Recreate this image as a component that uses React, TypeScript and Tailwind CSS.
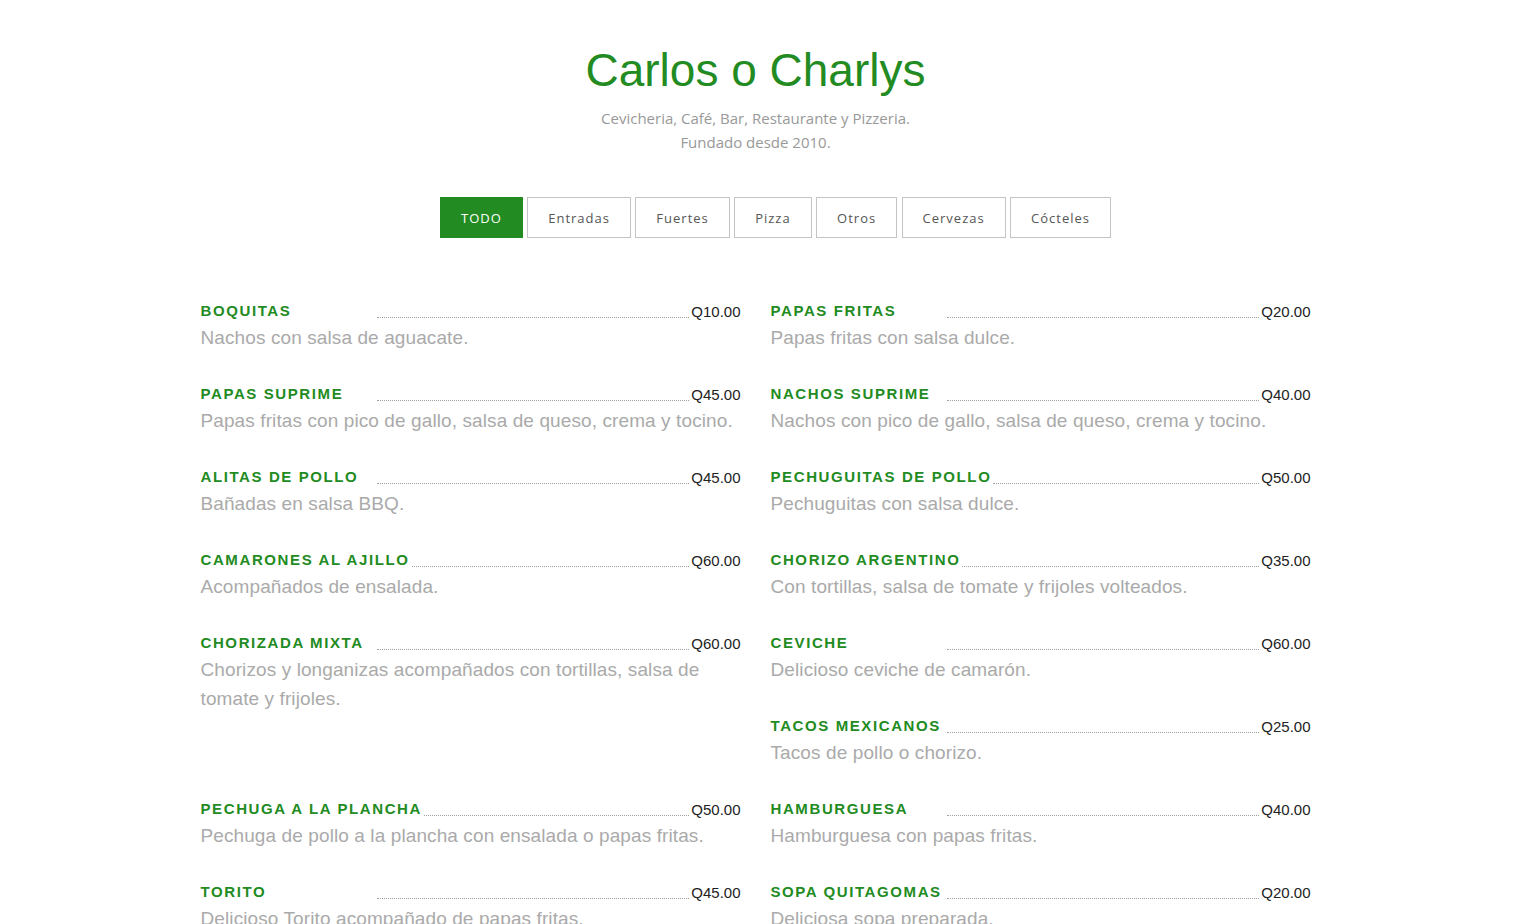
const filters = ["TODO", "Entradas", "Fuertes", "Pizza", "Otros", "Cervezas", "Cócteles"];

type Item = { name: string; price: string; desc: string; span?: boolean };

// in grid order: left, right, left, right...
const items: Item[] = [
  { name: "BOQUITAS", price: "Q10.00", desc: "Nachos con salsa de aguacate." },
  { name: "PAPAS FRITAS", price: "Q20.00", desc: "Papas fritas con salsa dulce." },
  { name: "PAPAS SUPRIME", price: "Q45.00", desc: "Papas fritas con pico de gallo, salsa de queso, crema y tocino." },
  { name: "NACHOS SUPRIME", price: "Q40.00", desc: "Nachos con pico de gallo, salsa de queso, crema y tocino." },
  { name: "ALITAS DE POLLO", price: "Q45.00", desc: "Bañadas en salsa BBQ." },
  { name: "PECHUGUITAS DE POLLO", price: "Q50.00", desc: "Pechuguitas con salsa dulce." },
  { name: "CAMARONES AL AJILLO", price: "Q60.00", desc: "Acompañados de ensalada." },
  { name: "CHORIZO ARGENTINO", price: "Q35.00", desc: "Con tortillas, salsa de tomate y frijoles volteados." },
  { name: "CHORIZADA MIXTA", price: "Q60.00", desc: "Chorizos y longanizas acompañados con tortillas, salsa de tomate y frijoles.", span: true },
  { name: "CEVICHE", price: "Q60.00", desc: "Delicioso ceviche de camarón." },
  { name: "TACOS MEXICANOS", price: "Q25.00", desc: "Tacos de pollo o chorizo." },
  { name: "PECHUGA A LA PLANCHA", price: "Q50.00", desc: "Pechuga de pollo a la plancha con ensalada o papas fritas." },
  { name: "HAMBURGUESA", price: "Q40.00", desc: "Hamburguesa con papas fritas." },
  { name: "TORITO", price: "Q45.00", desc: "Delicioso Torito acompañado de papas fritas." },
  { name: "SOPA QUITAGOMAS", price: "Q20.00", desc: "Deliciosa sopa preparada." },
];

function MenuItem({ item }: { item: Item }) {
  return (
    <div className={item.span ? "row-span-2" : ""}>
      <div className="flex items-baseline h-5 leading-5">
        <span className="min-w-[176px] pr-[2px] relative -top-[1px] text-[15px] font-bold tracking-[1.6px] text-[#228b22] font-['Liberation_Sans',Arial,sans-serif]">
          {item.name}
        </span>
        <span className="flex-1 border-b border-dotted border-[#a0a0a0] relative top-[1px]" />
        <span className="pl-[2px] text-[15px] text-[#222] font-['Liberation_Sans',Arial,sans-serif]">
          {item.price}
        </span>
      </div>
      <p className="pt-[1px] text-[19px] leading-[29px] tracking-[0.1px] text-[#aaaaaa] font-['Liberation_Sans',Arial,sans-serif]">
        {item.desc}
      </p>
    </div>
  );
}

export default function App() {
  return (
    <div className="w-[1511px] h-[924px] overflow-hidden bg-white">
      {/* HEADER */}
      <header className="pt-[45px] text-center">
        <h1 className="text-[46px] leading-[1.1] text-[#228b22] font-['Liberation_Sans',Arial,sans-serif]">
          Carlos o Charlys
        </h1>
        <p className="mt-[10px] text-[15px] leading-6 text-[#999] font-['Open_Sans',sans-serif]">
          Cevicheria, Café, Bar, Restaurante y Pizzeria.
          <br />
          Fundado desde 2010.
        </p>
      </header>

      {/* FILTERS */}
      <ul className="mt-[43px] pl-10 flex justify-center gap-[4.4px]">
        {filters.map((f, i) => (
          <li key={f}>
            <button
              className={`px-5 pt-[11px] pb-[9px] text-[13px] leading-[19px] tracking-[1px] border font-['Open_Sans',sans-serif] ${
                i === 0
                  ? "bg-[#228b22] border-[#228b22] text-white"
                  : "bg-white border-[#c4c4c4] text-[#555]"
              }`}
            >
              {f}
            </button>
          </li>
        ))}
      </ul>

      {/* MENU */}
      <div className="mt-[64px] mx-auto w-[1110px] grid grid-cols-2 gap-x-[30px] auto-rows-[83px]">
        {items.map((item) => (
          <MenuItem key={item.name} item={item} />
        ))}
      </div>
    </div>
  );
}
